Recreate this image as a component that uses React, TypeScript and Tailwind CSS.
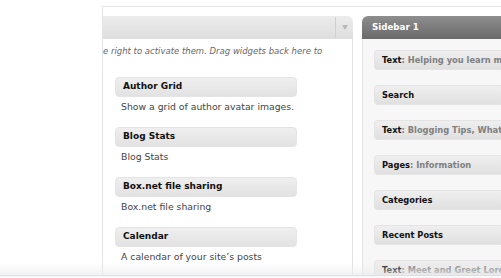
import React from 'react';

const available = [
    { title: 'Author Grid', desc: 'Show a grid of author avatar images.' },
    { title: 'Blog Stats', desc: 'Blog Stats' },
    { title: 'Box.net file sharing', desc: 'Box.net file sharing' },
    { title: 'Calendar', desc: 'A calendar of your site’s posts' },
];

const sidebar = [
    { title: 'Text', extra: 'Helping you learn more about blogging' },
    { title: 'Search' },
    { title: 'Text', extra: 'Blogging Tips, What’s New' },
    { title: 'Pages', extra: 'Information' },
    { title: 'Categories' },
    { title: 'Recent Posts' },
    { title: 'Text', extra: 'Meet and Greet Lorem' },
];

export default function App() {
    return (
        <div
            className="relative w-[501px] h-[278px] overflow-hidden bg-white text-[#333]"
            style={{ fontFamily: '"DejaVu Sans", Verdana, sans-serif' }}
        >
            <div className="ml-[102px] mt-[6px] h-[272px] border-t border-l border-[#e3e3e3] pt-[9px] flex">
                {/* Available widgets */}
                <div className="w-[250px] shrink-0 flex flex-col">
                    <div className="h-[23px] rounded-tr-[6px] bg-gradient-to-b from-[#ececec] to-[#dedede] flex justify-end">
                        <div className="w-[18px] border-l border-[#d0d0d0] my-[1px] flex items-center justify-center">
                            <div className="w-0 h-0 border-l-[3px] border-r-[3px] border-t-[5px] border-l-transparent border-r-transparent border-t-[#b8b8b8]" />
                        </div>
                    </div>
                    <div className="flex-1 border-r border-[#e3e3e3]">
                        <p className="pt-[6px] text-[8.5px] italic text-[#666] whitespace-nowrap">
                            e right to activate them. Drag widgets back here to
                        </p>
                        <div className="pl-[12px] pt-[19px] flex flex-col">
                            {available.map((w) => (
                                <div key={w.title} className="h-[50px]">
                                    <div className="w-[182px] h-[20px] rounded-[4px] border border-[#e4e4e4] bg-gradient-to-b from-[#efefef] to-[#e2e2e2] pl-[7px] flex items-center text-[9px] font-bold text-[#111]">
                                        {w.title}
                                    </div>
                                    <p className="pl-[6px] pt-[3px] text-[9.3px] text-[#444] whitespace-nowrap">{w.desc}</p>
                                </div>
                            ))}
                        </div>
                    </div>
                </div>

                {/* Sidebar 1 */}
                <div className="ml-[9px] flex-1 flex flex-col">
                    <div className="h-[23px] rounded-tl-[6px] bg-gradient-to-b from-[#8e8e8e] to-[#6a6a6a] pl-[10px] flex items-center text-[8.7px] font-bold text-white">
                        Sidebar 1
                    </div>
                    <div className="flex-1 bg-[#f7f7f7] border-l border-[#e3e3e3] pl-[11px] pt-[11px] flex flex-col gap-[15px] overflow-hidden">
                        {sidebar.map((w, i) => (
                            <div
                                key={i}
                                className="shrink-0 h-[20px] rounded-l-[4px] border border-r-0 border-[#e4e4e4] bg-gradient-to-b from-[#efefef] to-[#e0e0e0] pl-[7px] flex items-center text-[8.3px] font-bold text-[#111] whitespace-nowrap overflow-hidden"
                            >
                                {w.title}
                                {w.extra && <span className="text-[#808080]">: {w.extra}</span>}
                            </div>
                        ))}
                    </div>
                </div>
            </div>

            {/* bottom fade of the screenshot */}
            <div className="absolute left-0 right-0 bottom-[3px] h-[12px] bg-gradient-to-b from-transparent to-[#ececec]/70" />
            <div className="absolute left-0 right-0 bottom-0 h-[3px] bg-[#f8f9fb] border-t border-[#e0e0e0]" />
        </div>
    );
}
